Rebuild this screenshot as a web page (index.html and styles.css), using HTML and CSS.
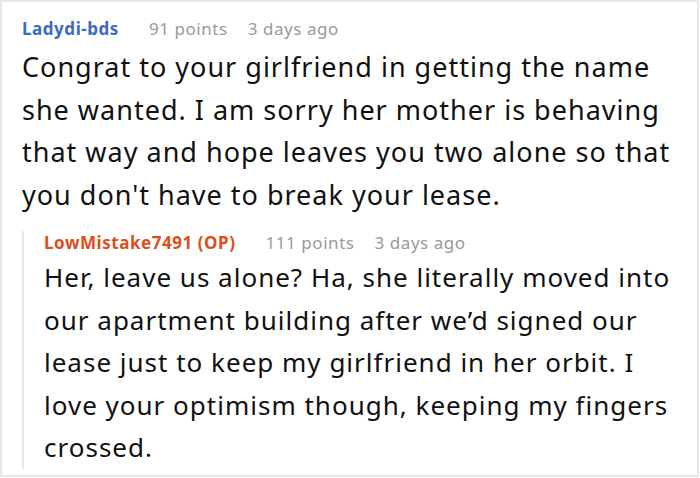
FILE: index.html
```html
<!DOCTYPE html>
<html lang="en">
<head>
<meta charset="utf-8">
<link rel="stylesheet" href="styles.css">
</head>
<body>
<div class="card">
  <div class="comment">
    <div class="meta">
      <span class="author">Ladydi-bds</span>
      <span class="points">91 points</span>
      <span class="time">3 days ago</span>
    </div>
    <p class="text">Congrat to your girlfriend in getting the name she wanted. I am sorry her mother is behaving that way and hope leaves you two alone so that you don't have to break your lease.</p>
    <div class="reply">
      <div class="meta">
        <span class="author op">LowMistake7491 (OP)</span>
        <span class="points">111 points</span>
        <span class="time">3 days ago</span>
      </div>
      <p class="text">Her, leave us alone? Ha, she literally moved into our apartment building after we’d signed our lease just to keep my girlfriend in her orbit. I love your optimism though, keeping my fingers crossed.</p>
    </div>
  </div>
</div>
</body>
</html>
```
FILE: styles.css
```css
html, body {
  margin: 0;
  padding: 0;
  background: #fff;
}
.card {
  box-sizing: border-box;
  width: 699px;
  height: 477px;
  border: 2px solid #e8e8e8;
  padding: 15px 4px 0 20px;
  font-family: "Noto Sans", "Open Sans", sans-serif;
  color: #111;
  overflow: hidden;
}
.meta {
  display: flex;
  align-items: baseline;
  font-size: 17px;
  line-height: 24px;
  letter-spacing: 0.55px;
}
.author {
  font-weight: bold;
  color: #3a6bc0;
  margin-right: 30px;
}
.author.op {
  color: #db4f1c;
}
.points, .time {
  color: #999;
}
.points {
  margin-right: 20px;
}
.text {
  margin: 5px 0 0;
  font-size: 27px;
  line-height: 42.5px;
  letter-spacing: 1px;
}
.reply {
  margin-top: 26px;
  border-left: 2px solid #e8e8e8;
  padding-left: 20px;
}
.reply .meta {
  margin-top: -11px;
}
.reply .text {
  margin: 1px 0 -8px;
  font-size: 26px;
}
```
